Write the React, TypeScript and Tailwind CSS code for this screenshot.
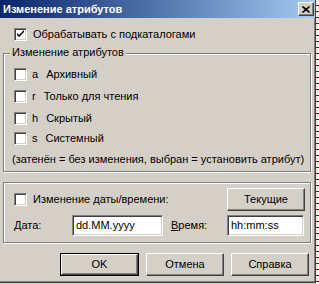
import React from "react";

const font = "font-['Liberation_Sans',Arial,sans-serif] text-[11px] leading-[13px] text-black";

const Check = ({ checked }: { checked?: boolean }) => (
  <span className="w-[13px] h-[13px] shrink-0 bg-white border border-t-[#808080] border-l-[#808080] border-r-white border-b-white shadow-[inset_1px_1px_0_#404040,inset_-1px_-1px_0_#d4d0c8] flex items-center justify-center">
    {checked && (
      <svg width="9" height="9" viewBox="0 0 9 9">
        <path d="M1 3 L1 5 L3 7 L8 2 L8 0 L3 5 Z" fill="#000" />
      </svg>
    )}
  </span>
);

const Btn = ({ label, w, def }: { label: string; w: string; def?: boolean }) => (
  <div className={`${w} h-[23px] ${def ? "border border-black" : ""}`}>
    <div className="w-full h-full flex items-center justify-center bg-[#d4d0c8] border border-t-white border-l-white border-r-[#404040] border-b-[#404040] shadow-[inset_-1px_-1px_0_#808080]">
      {label}
    </div>
  </div>
);

const Field = ({ value, w }: { value: string; w: string }) => (
  <div className={`${w} h-[21px] bg-white border border-t-[#808080] border-l-[#808080] border-r-white border-b-white shadow-[inset_1px_1px_0_#404040,inset_-1px_-1px_0_#d4d0c8] flex items-center pl-[3px]`}>
    {value}
  </div>
);

const attrs = [
  { k: "a", label: "Архивный", mb: "mb-[9px]" },
  { k: "r", label: "Только для чтения", mb: "mb-[9px]" },
  { k: "h", label: "Скрытый", mb: "mb-[7px]" },
  { k: "s", label: "Системный", mb: "" },
];

export default function App() {
  return (
    <div className={`w-[319px] h-[284px] flex overflow-hidden bg-[#d4d0c8] ${font}`}>
      <div className="w-[316px] h-[283px] shrink-0 flex flex-col bg-[#d4d0c8] border-r border-b border-[#404040] shadow-[inset_-1px_-1px_0_#808080]">
        {/* Title bar */}
        <div className="h-[18px] shrink-0 flex items-center justify-between pl-[3px] pr-[1px] bg-gradient-to-r from-[#0a246a] to-[#a6caf0]">
          <span className="font-bold text-white">Изменение атрибутов</span>
          <div className="w-[16px] h-[14px] flex items-center justify-center bg-[#d4d0c8] border border-t-white border-l-white border-r-[#404040] border-b-[#404040] shadow-[inset_-1px_-1px_0_#808080]">
            <svg width="8" height="7" viewBox="0 0 8 7">
              <path d="M0.5 0.5 L7.5 6.5 M7.5 0.5 L0.5 6.5" stroke="#000" strokeWidth="1.6" />
            </svg>
          </div>
        </div>

        <div className="flex items-center gap-[6px] mt-[10px] pl-[14px] h-[13px]">
          <Check checked />
          <span>Обрабатывать с подкаталогами</span>
        </div>

        {/* Attributes group */}
        <div className="relative mt-[12px] ml-[3px] w-[308px] h-[119px] border border-[#808080] shadow-[inset_1px_1px_0_#fff,1px_1px_0_#fff] pt-[14px] pl-[10px]">
          <span className="absolute top-[-8px] left-[6px] px-[2px] bg-[#d4d0c8]">Изменение атрибутов</span>
          {attrs.map((a) => (
            <div key={a.k} className={`flex items-center h-[13px] ${a.mb}`}>
              <Check />
              <span className="ml-[5px]">{a.k}</span>
              <span className="ml-[8px]">{a.label}</span>
            </div>
          ))}
          <div className="mt-[8px] -ml-[2px]">(затенён = без изменения, выбран = установить атрибут)</div>
        </div>

        {/* Date group */}
        <div className="mt-[10px] ml-[3px] w-[308px] h-[61px] border border-[#808080] shadow-[inset_1px_1px_0_#fff,1px_1px_0_#fff] pt-[5px] pl-[10px]">
          <div className="flex items-center h-[23px]">
            <Check />
            <span className="pl-[6px]">Изменение даты/времени:</span>
            <div className="ml-auto mr-[5px]">
              <Btn label="Текущие" w="w-[78px]" />
            </div>
          </div>
          <div className="flex items-center mt-[4px]">
            <span className="w-[58px]"><u>Д</u>ата:</span>
            <Field value="dd.MM.yyyy" w="w-[91px]" />
            <span className="w-[64px] pl-[8px]"><u>В</u>ремя:</span>
            <Field value="hh:mm:ss" w="w-[77px]" />
          </div>
        </div>

        {/* Buttons */}
        <div className="flex gap-[7px] mt-[10px] ml-[60px]">
          <Btn label="OK" w="w-[79px]" def />
          <Btn label="Отмена" w="w-[78px]" />
          <Btn label="Справка" w="w-[78px]" />
        </div>
      </div>
      <div className="w-[3px] h-full bg-[repeating-linear-gradient(180deg,#efece6_0px,#efece6_5px,#7a1414_5px,#7a1414_6px)]" />
    </div>
  );
}
